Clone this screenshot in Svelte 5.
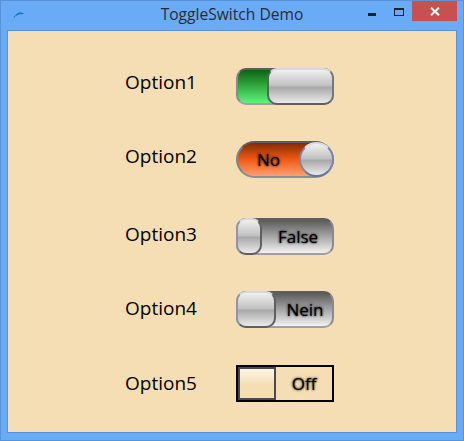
<script>
  /** ToggleSwitch demo window: five styled switches with their labels. */
  const labels = ['Option1', 'Option2', 'Option3', 'Option4', 'Option5'];

  const switches = [
    { kind: 'green', text: '' },
    { kind: 'orange', text: 'No' },
    { kind: 'slim', text: 'False' },
    { kind: 'wide', text: 'Nein' },
    { kind: 'flat', text: 'Off' },
  ];
</script>

<div class="window">
  <header class="titlebar">
    <svg class="app-icon" width="13" height="7" viewBox="0 0 14 8">
      <path d="M1 7.5 C2 6 3 4.8 4.5 3.6 C6 2 8.5 .9 10.5 1.6 L13.5 3 L10.5 3.8 C8 3.8 6.5 4.2 5 5.4 L3.5 5 L3 7 Z" fill="#1078c4" />
    </svg>
    <span class="title">ToggleSwitch Demo</span>
    <div class="controls">
      <span class="minimize"></span>
      <span class="maximize"></span>
      <span class="close">
        <svg width="10" height="9" viewBox="0 0 10 9">
          <path d="M1 .8 L9 8.2 M9 .8 L1 8.2" stroke="#fff" stroke-width="2" />
        </svg>
      </span>
    </div>
  </header>

  <main class="content">
    <div class="labels">
      {#each labels as label}
        <span class="label">{label}</span>
      {/each}
    </div>
    <div class="switches">
      {#each switches as item}
        <button type="button" class="toggle {item.kind}">
          <span class="thumb"></span>
          {#if item.text}
            <span class="state">{item.text}</span>
          {/if}
        </button>
      {/each}
    </div>
  </main>
</div>

<style>
  :global(body) {
    margin: 0;
  }

  .window {
    width: 464px;
    height: 441px;
    box-sizing: border-box;
    display: flex;
    flex-direction: column;
    padding: 0 6px 7px;
    background: #6aabf7;
    border: 1px solid #5b92d6;
    font-family: "Open Sans", "Noto Sans", sans-serif;
  }

  .titlebar {
    height: 29px;
    flex-shrink: 0;
    display: flex;
    position: relative;
    align-items: center;
    justify-content: center;
  }

  .app-icon {
    position: absolute;
    left: 5px;
    top: 10px;
  }

  .title {
    font-size: 15.6px;
    color: #2a2a35;
    margin-top: -3px;
  }

  .controls {
    position: absolute;
    top: 0;
    right: 0;
    display: flex;
    align-items: flex-start;
  }

  .minimize {
    width: 8px;
    height: 3px;
    margin-top: 12px;
    margin-right: 18px;
    background: #222;
  }

  .maximize {
    width: 10px;
    height: 8px;
    box-sizing: border-box;
    margin-top: 7px;
    margin-right: 8px;
    border: 1px solid #222;
    border-top-width: 2px;
  }

  .close {
    width: 45px;
    height: 20px;
    display: flex;
    align-items: center;
    justify-content: center;
    background: #c75050;
  }

  .content {
    flex: 1;
    display: flex;
    background: #f5deb3;
    border: 1px solid #5b92d6;
    box-sizing: border-box;
  }

  .labels {
    width: 164px;
    padding-left: 117px;
    padding-top: 39px;
    box-sizing: content-box;
    display: grid;
    grid-template-rows: 74px 78px 74px 75px 24px;
    align-content: start;
  }

  .label {
    font-size: 19px;
    line-height: 24px;
    color: #000;
    white-space: nowrap;
  }

  .switches {
    margin-left: -53px;
    padding-top: 37px;
    display: grid;
    grid-template-rows: 73px 77px 73px 74px 36px;
    align-content: start;
  }

  .toggle {
    width: 98px;
    height: 37px;
    box-sizing: border-box;
    padding: 0;
    display: flex;
    align-items: stretch;
    font: inherit;
    border: 2px solid;
    border-color: #5d5d5d #8a8a8a #a0a0a0 #8a8a8a;
    border-radius: 10px;
    background: linear-gradient(#5a5a5a, #f2f2f2);
  }

  .thumb {
    box-sizing: border-box;
    flex-shrink: 0;
    border: 2px solid;
    border-color: #d8d8d8 #5f5f5f #5f5f5f #8c96a8;
    border-radius: 10px;
    margin: -2px;
    background: linear-gradient(#f0f0f0, #c0c0c0 48%, #a8a8a8 52%, #eaeaea);
  }

  .state {
    flex: 1;
    font-size: 17px;
    color: #000;
    text-shadow: 0 0 2px rgba(0, 0, 0, 0.7), 0 0 3px rgba(0, 0, 0, 0.5);
    display: flex;
    align-items: center;
    justify-content: center;
  }

  .green {
    justify-content: flex-end;
    background: linear-gradient(#0b6412, #5df477);
  }

  .green .thumb {
    width: 67px;
    border-color: #d8d8d8 #777 #5f5f5f #5f5f5f;
  }

  .orange {
    flex-direction: row-reverse;
    border-radius: 19px;
    background: linear-gradient(#842a05, #f05a14 50%, #ffa070);
    border-color: #5c5c62 #7d8490 #888e9c #7d8490;
  }

  .orange .thumb {
    width: 35px;
    height: 35px;
    border-radius: 50%;
    margin: -1px -2px 0 0;
    border-color: #d8dce4 #7a88a8 #66759a #7a88a8;
  }

  .orange .state {
    justify-content: flex-start;
    padding-left: 19px;
  }

  .slim .thumb {
    width: 26px;
  }

  .slim .state {
    padding-left: 4px;
  }

  .wide .thumb {
    width: 40px;
  }

  .wide .state {
    padding-left: 4px;
  }

  .flat {
    border-color: #000;
    border-radius: 0;
    background: transparent;
  }

  .flat .thumb {
    width: 38px;
    margin: 0;
    border-color: #4a4a4a;
    border-radius: 0;
    background: linear-gradient(#fdf6e6, #f5deb3 55%);
  }

  .flat .state {
    padding-left: 0;
  }
</style>
